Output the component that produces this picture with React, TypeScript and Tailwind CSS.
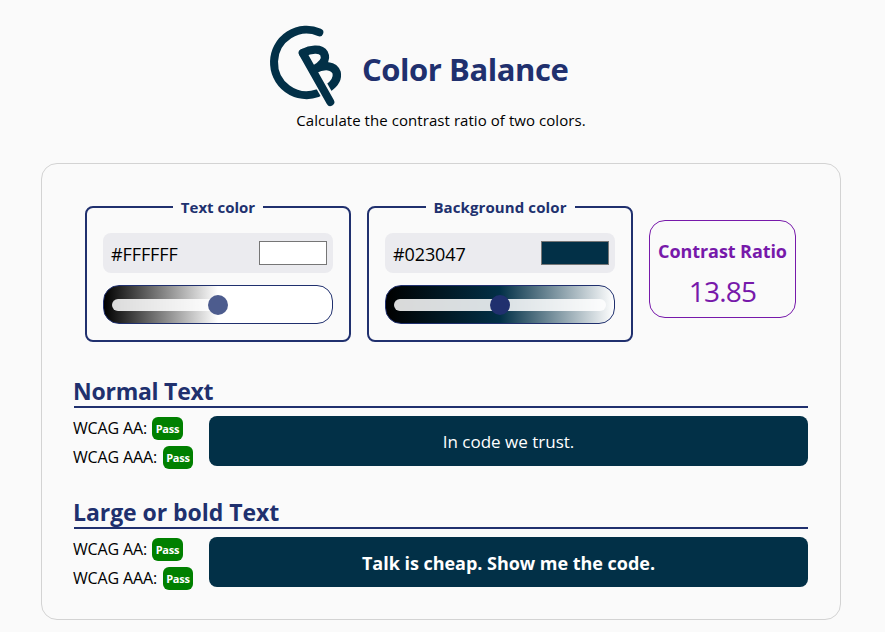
import type { ReactNode } from "react";

function Logo() {
  return (
    <svg className="shrink-0" width="100" height="100" viewBox="0 0 300 300" fill="none" stroke="#023047" strokeLinecap="round" strokeLinejoin="round">
      <path d="M178 52A98 98 0 1 0 172 235" strokeWidth="24" />
      <path d="M129 114C150 103 182 98 192 115C202 134 184 152 162 164C194 147 222 151 230 173C234 192 221 208 205 219" strokeWidth="25" />
      <path d="M179 202L216 267" stroke="#fafafa" strokeWidth="36" strokeLinecap="butt" />
      <path d="M128 114L211 261" strokeWidth="24" />
    </svg>
  );
}

function Slider({ gradient, thumb }: { gradient: string; thumb: string }) {
  return (
    <div className={`mt-3 flex h-[39px] items-center rounded-2xl border border-[#20306e] px-2 ${gradient}`}>
      <div className="flex h-3 w-full items-center justify-center rounded-md bg-white/85">
        <div className={`size-5 shrink-0 rounded-full ${thumb}`} />
      </div>
    </div>
  );
}

function ColorField({ label, labelClass, value, swatch, gradient, thumb }: { label: string; labelClass: string; value: string; swatch: string; gradient: string; thumb: string }) {
  return (
    <fieldset className="h-[145px] w-[266px] rounded-lg border-2 border-[#20306e] px-4 pt-4">
      <legend className={`mx-auto flex h-5 items-center justify-center whitespace-nowrap text-[15px] font-bold text-[#20306e] ${labelClass}`}>{label}</legend>
      <div className="flex h-10 items-center justify-between rounded-lg bg-[#ebebef] pr-1.5 pl-2">
        <span className="pt-0.5 text-[18px] leading-6 tracking-[-0.1px]">{value}</span>
        <span className={`h-6 w-[68px] border border-[#767676] ${swatch}`} />
      </div>
      <Slider gradient={gradient} thumb={thumb} />
    </fieldset>
  );
}

function Rating({ level, levelClass, badgeClass }: { level: string; levelClass: string; badgeClass: string }) {
  return (
    <div className="flex h-[29px] items-center whitespace-nowrap">
      <span className={`-mt-0.5 -ml-px text-[16px] tracking-[-0.15px] ${levelClass}`}>{level}</span>
      <span className={`flex h-[23px] items-center justify-center rounded-md bg-[#008000] pt-px text-[11px] font-bold tracking-[-0.2px] text-white ${badgeClass}`}>Pass</span>
    </div>
  );
}

function Sample({ title, titleClass, children }: { title: string; titleClass: string; children: ReactNode }) {
  return (
    <section className="h-[121px]">
      <h2 className={`flex h-[34px] items-center whitespace-nowrap border-b-2 border-[#20306e] pt-0.5 text-[23px] font-bold text-[#20306e] ${titleClass}`}>
        <span className="-ml-px">{title}</span>
      </h2>
      <div className="flex pt-2">
        <div className="-mt-0.5 w-[135px]">
          <Rating level="WCAG AA:" levelClass="w-[79px]" badgeClass="w-[31px]" />
          <Rating level="WCAG AAA:" levelClass="w-[90px]" badgeClass="w-[30px]" />
        </div>
        <div className="flex h-[50px] flex-1 items-center justify-center rounded-lg bg-[#023047] pt-0.5 text-white">{children}</div>
      </div>
    </section>
  );
}

export default function App() {
  return (
    <div className="h-[632px] w-full overflow-hidden bg-[#fafafa] font-['Open_Sans','Noto_Sans',sans-serif] text-black">
      <div className="w-[882px]">
        <header className="h-[163px] pt-[15px]">
          <div className="flex h-[93px] items-start pl-[260px]">
            <Logo />
            <h1 className="ml-0.5 flex h-[108px] items-center whitespace-nowrap text-[31px] font-bold tracking-[-0.45px] text-[#20306e]">Color Balance</h1>
          </div>
          <p className="text-center text-[15px] leading-6 tracking-[0.06px]">Calculate the contrast ratio of two colors.</p>
        </header>
        <main className="mx-auto h-[457px] w-[800px] rounded-2xl border border-[#d3d3d3] px-8">
          <div className="flex h-[210px] gap-4 pt-[33px] pl-[11px]">
            <ColorField label="Text color" labelClass="w-[90px]" value="#FFFFFF" swatch="bg-white" gradient="bg-[linear-gradient(to_right,#000,#fff_50%,#fff)]" thumb="bg-[#4d5c8e]" />
            <ColorField label="Background color" labelClass="w-[149px] tracking-[0.1px]" value="#023047" swatch="bg-[#023047]" gradient="bg-[linear-gradient(to_right,#000,#023047_50%,#fff)]" thumb="bg-[#20306e]" />
            <div className="mt-[23px] flex h-[98px] w-[147px] flex-col items-center rounded-2xl border border-[#7719aa] pt-[18px] whitespace-nowrap text-[#7719aa]">
              <strong className="text-[18px] leading-6 tracking-[-0.08px]">Contrast Ratio</strong>
              <span className="mt-2.5 text-[28px] leading-9 tracking-[-0.8px]">13.85</span>
            </div>
          </div>
          <Sample title="Normal Text" titleClass="tracking-[-0.25px]">
            <span className="text-[17px]">In code we trust.</span>
          </Sample>
          <Sample title="Large or bold Text" titleClass="tracking-[-0.05px]">
            <span className="text-[18px] font-bold tracking-[-0.03px]">Talk is cheap. Show me the code.</span>
          </Sample>
        </main>
      </div>
    </div>
  );
}
